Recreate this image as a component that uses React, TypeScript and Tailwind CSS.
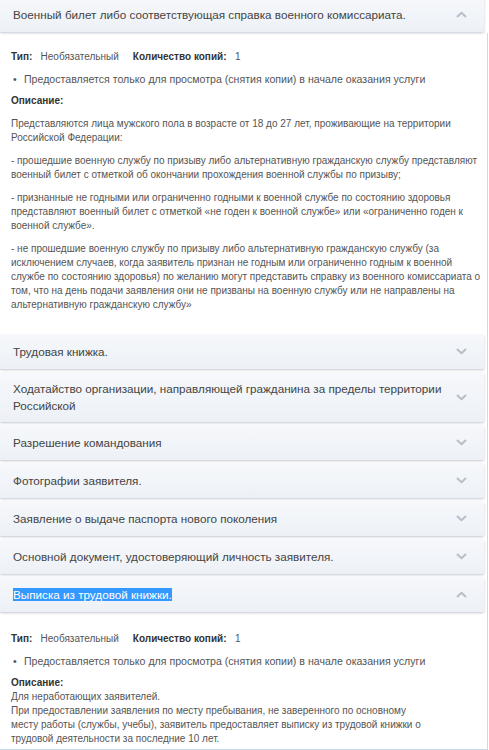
import React from "react";

function Chevron({ up }: { up?: boolean }) {
  return (
    <svg width="11" height="7" viewBox="0 0 11 7" className="shrink-0">
      <polyline
        points={up ? "1,6 5.5,1.8 10,6" : "1,1 5.5,5.2 10,1"}
        fill="none"
        stroke="#b7bfc8"
        strokeWidth="2"
        strokeLinejoin="round"
      />
    </svg>
  );
}

function Header({ title, open, selected }: { title: string; open?: boolean; selected?: boolean }) {
  return (
    <div className="flex min-h-[36px] w-[484px] items-center justify-between rounded-r-[3px] border-b border-[#d4dbe3] bg-gradient-to-b from-[#f6f8fb] to-[#edf1f6] py-[8px] pl-[13px] pr-[17px] shadow-[1px_1px_2px_rgba(0,0,0,0.10)]">
      <span className="max-w-[430px] text-[11.7px] leading-[17px] text-[#444]">
        {selected ? <span className="bg-[#3399fe] text-white">{title}</span> : title}
      </span>
      <Chevron up={open} />
    </div>
  );
}

function Meta() {
  return (
    <>
      <div className="flex gap-[14px]">
        <span>
          <b className="text-[#333]">Тип:</b>&nbsp;&nbsp; Необязательный
        </span>
        <span>
          <b className="text-[#333]">Количество копий:</b>&nbsp;&nbsp; 1
        </span>
      </div>
      <div className="mt-[8px] flex pl-[2px] text-[10.6px]">
        <span className="w-[11px]">•</span>
        <span>Предоставляется только для просмотра (снятия копии) в начале оказания услуги</span>
      </div>
    </>
  );
}

const paragraphs = [
  "Представляются лица мужского пола в возрасте от 18 до 27 лет, проживающие на территории Российской Федерации:",
  "- прошедшие военную службу по призыву либо альтернативную гражданскую службу представляют военный билет с отметкой об окончании прохождения военной службы по призыву;",
  "- признанные не годными или ограниченно годными к военной службе по состоянию здоровья представляют военный билет с отметкой «не годен к военной службе» или «ограниченно годен к военной службе».",
  "- не прошедшие военную службу по призыву либо альтернативную гражданскую службу (за исключением случаев, когда заявитель признан не годным или ограниченно годным к военной службе по состоянию здоровья) по желанию могут представить справку из военного комиссариата о том, что на день подачи заявления они не призваны на военную службу или не направлены на альтернативную гражданскую службу»",
];

const others = [
  "Трудовая книжка.",
  "Ходатайство организации, направляющей гражданина за пределы территории Российской",
  "Разрешение командования",
  "Фотографии заявителя.",
  "Заявление о выдаче паспорта нового поколения",
  "Основной документ, удостоверяющий личность заявителя.",
];

export default function App() {
  return (
    <div className="h-[750px] w-[489px] overflow-hidden bg-white font-['Liberation_Sans',Arial,sans-serif]">
      <div className="-mt-[3px]">
        <Header title="Военный билет либо соответствующая справка военного комиссариата." open />
      </div>
      <div className="w-[488px] border-r border-b border-[#c8dbec]">
        <div className="pb-[22px] pl-[11px] pr-[4px] pt-[17px] text-[10px] leading-[14px] text-[#555]">
          <Meta />
          <div className="mt-[8px] font-bold text-[#333]">Описание:</div>
          {paragraphs.map((p) => (
            <p key={p} className="mt-[9px]">
              {p}
            </p>
          ))}
        </div>
        <div className="flex flex-col gap-[2px]">
          {others.map((t) => (
            <Header key={t} title={t} />
          ))}
          <Header title="Выписка из трудовой книжки." open selected />
        </div>
        <div className="pb-[3px] pl-[11px] pr-[20px] pt-[19px] text-[10px] leading-[14px] text-[#555]">
          <Meta />
          <div className="mt-[8px] font-bold text-[#333]">Описание:</div>
          <div>Для неработающих заявителей.</div>
          <div className="max-w-[412px]">
            При предоставлении заявления по месту пребывания, не заверенного по основному месту работы (службы,
            учебы), заявитель предоставляет выписку из трудовой книжки о трудовой деятельности за последние 10 лет.
          </div>
        </div>
      </div>
      <div className="h-[20px] bg-[#e6eff8]" />
    </div>
  );
}
